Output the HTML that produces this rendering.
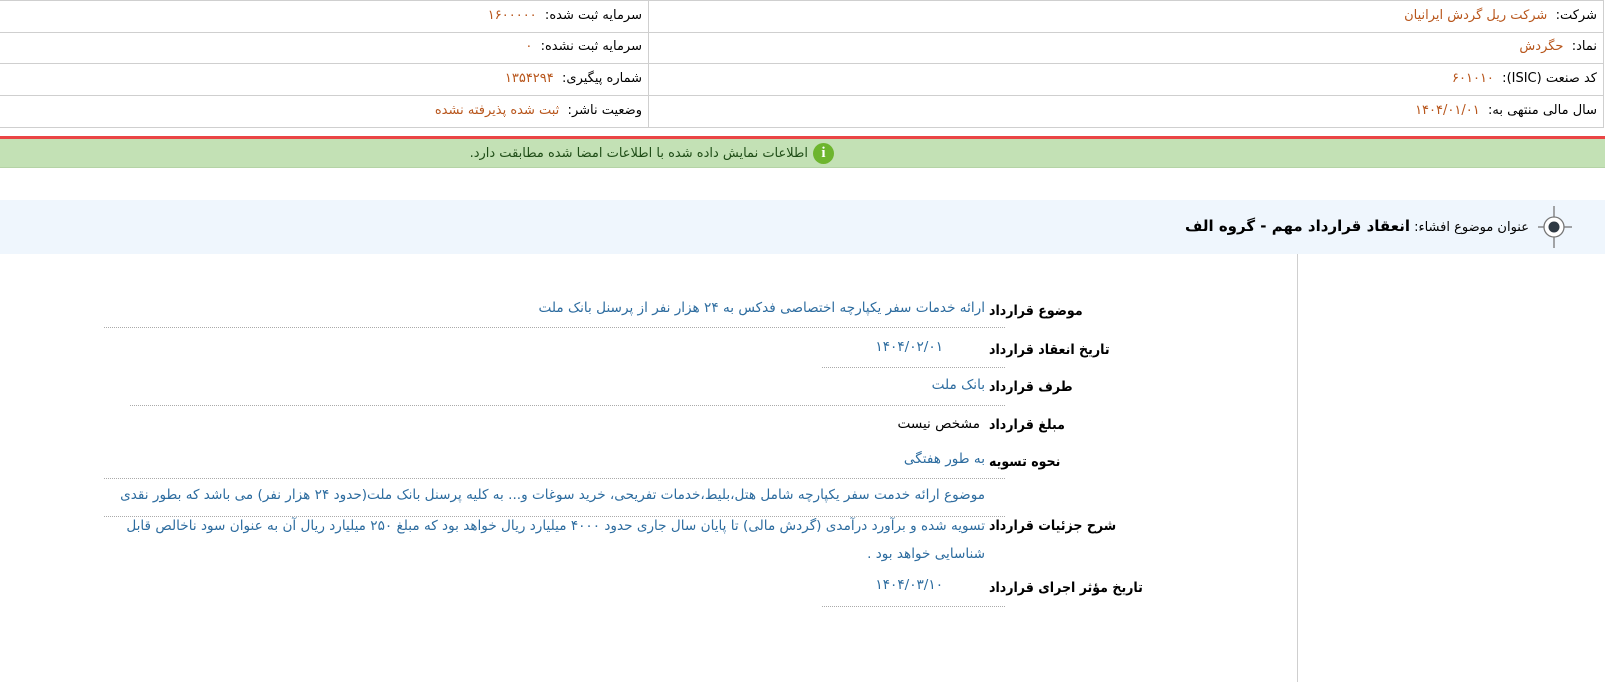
<!DOCTYPE html>
<html lang="fa" dir="rtl"><head><meta charset="utf-8">
<style>
*{margin:0;padding:0;box-sizing:border-box}
body{width:1605px;height:682px;background:#fff;font-family:"DejaVu Sans","Liberation Sans",sans-serif;font-size:13px;color:#000;position:relative;overflow:hidden}
.a{position:absolute;white-space:nowrap;direction:rtl}
.hl{position:absolute;height:1px;background:#cfcfcf}
.v{color:#b8561c}
.b{color:#2d6c9f;font-size:13.6px}
.lb{font-weight:bold;font-size:14px;font-family:"DejaVu Sans Condensed","DejaVu Sans",sans-serif;left:989px}
.dot{position:absolute;border-top:1px dotted #aaa;height:0}
</style></head><body>
<div class="hl" style="left:0;top:0;width:1604px"></div>
<div class="hl" style="left:0;top:32px;width:1604px"></div>
<div class="hl" style="left:0;top:63px;width:1604px"></div>
<div class="hl" style="left:0;top:95px;width:1604px"></div>
<div class="hl" style="left:0;top:127px;width:1604px"></div>
<div style="position:absolute;left:648px;top:0;width:1px;height:128px;background:#cfcfcf"></div>
<div style="position:absolute;left:1603px;top:0;width:1px;height:128px;background:#cfcfcf"></div>

<div class="a" style="right:8px;top:8px">شرکت: &nbsp;<span class="v">شرکت ریل گردش ایرانیان</span></div>
<div class="a" style="right:8px;top:39px">نماد: &nbsp;<span class="v">حگردش</span></div>
<div class="a" style="right:8px;top:71px">کد صنعت (ISIC): &nbsp;<span class="v">۶۰۱۰۱۰</span></div>
<div class="a" style="right:8px;top:103px">سال مالی منتهی به: &nbsp;<span class="v">۱۴۰۴/۰۱/۰۱</span></div>

<div class="a" style="right:963px;top:8px">سرمایه ثبت شده: &nbsp;<span class="v">۱۶۰۰۰۰۰</span></div>
<div class="a" style="right:963px;top:39px">سرمایه ثبت نشده: &nbsp;<span class="v">۰</span></div>
<div class="a" style="right:963px;top:71px">شماره پیگیری: &nbsp;<span class="v">۱۳۵۴۲۹۴</span></div>
<div class="a" style="right:963px;top:103px">وضعیت ناشر: &nbsp;<span class="v">ثبت شده پذیرفته نشده</span></div>

<div style="position:absolute;left:0;top:136px;width:1605px;height:3px;background:#ea4545"></div>
<div style="position:absolute;left:0;top:139px;width:1605px;height:29px;background:#c3e1b5;border-bottom:1px solid #b5d3a6"></div>
<div style="position:absolute;left:813px;top:143px;width:21px;height:21px;border-radius:50%;background:#6db52e;color:#fff;font-weight:bold;font-size:15px;text-align:center;line-height:21px;font-family:'Liberation Serif',serif">i</div>
<div class="a" style="right:797px;top:146px;color:#1f4d17">اطلاعات نمایش داده شده با اطلاعات امضا شده مطابقت دارد.</div>

<div style="position:absolute;left:0;top:200px;width:1605px;height:54px;background:#eff6fd"></div>
<svg style="position:absolute;left:1538px;top:206px" width="34" height="42" viewBox="0 0 34 42">
<circle cx="16" cy="21" r="10" fill="#fff" stroke="#777" stroke-width="1.3"/>
<circle cx="16" cy="21" r="5.5" fill="#2f3a44"/>
<line x1="16" y1="0" x2="16" y2="11" stroke="#777" stroke-width="1.3"/>
<line x1="16" y1="31" x2="16" y2="42" stroke="#777" stroke-width="1.3"/>
<line x1="0" y1="21" x2="6" y2="21" stroke="#777" stroke-width="1.3"/>
<line x1="26" y1="21" x2="34" y2="21" stroke="#777" stroke-width="1.3"/>
</svg>
<div class="a" style="right:76px;top:217px;font-size:13px">عنوان موضوع افشاء: <span style="font-weight:bold;font-size:15px">انعقاد قرارداد مهم - گروه الف</span></div>

<div style="position:absolute;left:1297px;top:254px;width:1px;height:428px;background:#cfcfcf"></div>

<div class="a lb" style="top:303px">موضوع قرارداد</div>
<div class="a b" style="right:620px;top:300px">ارائه خدمات سفر یکپارچه اختصاصی فدکس به ۲۴ هزار نفر از پرسنل بانک ملت</div>
<div class="dot" style="left:104px;top:327px;width:901px"></div>

<div class="a lb" style="top:342px">تاریخ انعقاد قرارداد</div>
<div class="a b" style="right:662px;top:339px">۱۴۰۴/۰۲/۰۱</div>
<div class="dot" style="left:822px;top:367px;width:183px"></div>

<div class="a lb" style="top:379px">طرف قرارداد</div>
<div class="a b" style="right:620px;top:377px">بانک ملت</div>
<div class="dot" style="left:130px;top:405px;width:875px"></div>

<div class="a lb" style="top:417px">مبلغ قرارداد</div>
<div class="a" style="right:625px;top:416px;font-size:13.6px">مشخص نیست</div>

<div class="a lb" style="top:454px">نحوه تسویه</div>
<div class="a b" style="right:620px;top:451px">به طور هفتگی</div>
<div class="dot" style="left:104px;top:478px;width:901px"></div>

<div class="a lb" style="top:518px">شرح جزئیات قرارداد</div>
<div class="a b" style="right:620px;top:487px">موضوع ارائه خدمت سفر یکپارچه شامل هتل،بلیط،خدمات تفریحی، خرید سوغات و... به کلیه پرسنل بانک ملت(حدود ۲۴ هزار نفر) می باشد که بطور نقدی</div>
<div class="dot" style="left:104px;top:516px;width:901px"></div>
<div class="a b" style="right:620px;top:518px">تسویه شده و برآورد درآمدی (گردش مالی) تا پایان سال جاری حدود ۴۰۰۰ میلیارد ریال خواهد بود که مبلغ ۲۵۰ میلیارد ریال آن به عنوان سود ناخالص قابل</div>
<div class="a b" style="right:620px;top:546px">شناسایی خواهد بود .</div>

<div class="a lb" style="top:580px">تاریخ مؤثر اجرای قرارداد</div>
<div class="a b" style="right:662px;top:577px">۱۴۰۴/۰۳/۱۰</div>
<div class="dot" style="left:822px;top:606px;width:183px"></div>
</body></html>
